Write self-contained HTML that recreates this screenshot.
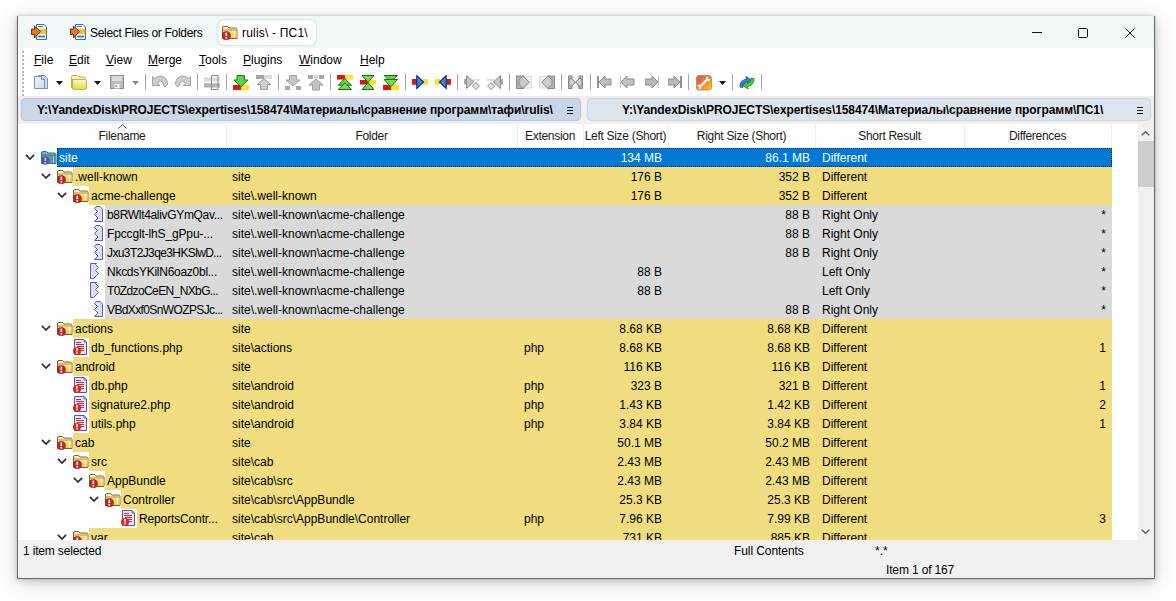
<!DOCTYPE html><html><head><meta charset="utf-8"><style>
*{margin:0;padding:0;box-sizing:border-box}
html,body{width:1176px;height:601px;overflow:hidden;background:#fefefe;font-family:"Liberation Sans", sans-serif;font-size:12px;color:#000;position:relative}
.abs{position:absolute}
.t{position:absolute;white-space:nowrap;line-height:14px}
u{text-decoration:underline;text-underline-offset:1px}
</style></head><body>
<svg width="0" height="0" style="position:absolute"><defs><symbol id="app" viewBox="0 0 16 16"><path d="M5.5 0.5 H13 L15.5 3 V15.5 H5.5 Z" fill="#eef5fc" stroke="#3c6cb4"/>
<path d="M7 2.5 H12" stroke="#4a78c0" stroke-width="1"/>
<rect x="6" y="5" width="9" height="5" fill="#f0c420"/>
<path d="M7 12.5 H14" stroke="#3c6cb4" stroke-width="1.6"/>
<path d="M0.5 5 H3.5 V2 L9.5 7.5 L3.5 14 V10.5 H0.5 Z" fill="#e8752a" stroke="#5a2a10" stroke-width="0.9"/></symbol><symbol id="fold" viewBox="0 0 16 16"><defs><linearGradient id="fg" x1="0" y1="0" x2="0" y2="1"><stop offset="0" stop-color="#fbe58a"/><stop offset="1" stop-color="#f0c850"/></linearGradient></defs>
<path d="M0.5 4 Q0.5 2.5 2 2.5 H5.5 L7 4 H13.5 Q15 4 15 5.5 V14.5 H0.5 Z" fill="#fdf0b8" stroke="#7c6420"/>
<path d="M1 6.5 H14.5 V14 H1 Z" fill="url(#fg)"/>
<path d="M1 6 H14.5" stroke="#a89040" stroke-width="1"/>
<path d="M12.5 7 V13.5" stroke="#fff6c8" stroke-width="1"/>
<circle cx="4.3" cy="11.7" r="4.1" fill="#c42626" stroke="#8a1818" stroke-width="0.6"/>
<path d="M4.3 8.6 V12.2" stroke="#fff" stroke-width="1.6"/><rect x="3.5" y="13" width="1.6" height="1.6" fill="#fff"/></symbol><symbol id="site" viewBox="0 0 16 16"><path d="M0.5 4 Q0.5 2.5 2 2.5 H5.5 L7 4 H13.5 Q15 4 15 5.5 V14.5 H0.5 Z" fill="#78b8bc" stroke="#3a6e7c"/>
<path d="M1 6.5 H14.5 V14 H1 Z" fill="#4e9ca4"/>
<path d="M1 6 H14.5" stroke="#3a6e7c" stroke-width="1"/>
<path d="M12.5 7 V13.5" stroke="#8cd0d0" stroke-width="1"/>
<circle cx="4.3" cy="11.7" r="4.1" fill="#5058a8"/>
<path d="M4.3 8.6 V12.2" stroke="#c0c4f0" stroke-width="1.6"/><rect x="3.5" y="13" width="1.6" height="1.6" fill="#c0c4f0"/></symbol><symbol id="php" viewBox="0 0 16 16"><path d="M1.5 0.5 H11 L13.5 3 V15.5 H1.5 Z" fill="#e6e6fa" stroke="#5252b4"/>
<path d="M11 0.5 V3 H13.5" fill="none" stroke="#5252b4" stroke-width="0.8"/>
<path d="M3 3.5 H8 M3 5.5 H11 M4 7.5 H11 M5 9.5 H11 M6 11.5 H11" stroke="#d02828" stroke-width="1"/>
<circle cx="4" cy="12" r="4" fill="#cc2c22"/>
<path d="M4 9 V12.4" stroke="#fff" stroke-width="1.4"/><rect x="3.3" y="13.1" width="1.4" height="1.4" fill="#fff"/></symbol><symbol id="rfile" viewBox="0 0 16 16"><path d="M7 0.5 H11 L13.5 3 V15.5 H5.5 L9 12 L5.5 8.5 L8.5 5.5 L5.5 2.5 Z" fill="#dcdcf6" stroke="#5a5ab8" stroke-dasharray="none"/></symbol><symbol id="lfile" viewBox="0 0 16 16"><path d="M1.5 0.5 H7.5 L6.5 1.5 L9.5 4.5 L6.5 7.5 L9.5 10.5 L4.5 15.5 H1.5 Z" fill="#dcdcf6" stroke="#5a5ab8"/></symbol><symbol id="new" viewBox="0 0 16 16"><defs><linearGradient id="ng" x1="0" y1="0" x2="1" y2="1"><stop offset="0" stop-color="#f4f8fe"/><stop offset="1" stop-color="#c4d8f2"/></linearGradient></defs>
<path d="M4.5 0.5 H10.5 L13.5 3.5 V13.5 H4.5 Z" fill="#c8daf2" stroke="#8090b0"/>
<path d="M0.5 1.5 H7.5 L10.5 4.5 V13.5 H0.5 Z" fill="url(#ng)" stroke="#8090b0"/>
<path d="M7.5 1.5 V4.5 H10.5" fill="#e0ebf8" stroke="#8090b0"/></symbol><symbol id="open" viewBox="0 0 16 16"><defs><linearGradient id="og" x1="0" y1="0" x2="0" y2="1"><stop offset="0" stop-color="#fbf8c8"/><stop offset="1" stop-color="#dede30"/></linearGradient></defs>
<path d="M0.5 2 Q0.5 0.5 2 0.5 H6 L7.5 2 H13 Q14.5 2 14.5 3.5 V5 H0.5 Z" fill="#fbf7c0" stroke="#bdb43a"/>
<path d="M0.5 4.5 Q0.5 4 1.5 4 V13 Q0.5 13 0.5 12 Z" fill="#fbf7c0" stroke="#bdb43a"/>
<path d="M3 4.5 H14 Q15.5 4.5 15.5 6 V13 Q15.5 14.5 14 14.5 H3 Q1.5 14.5 1.5 13 V6 Q1.5 4.5 3 4.5 Z" fill="url(#og)" stroke="#bdb43a"/></symbol><symbol id="save" viewBox="0 0 16 16"><rect x="0.5" y="0.5" width="13" height="13" fill="#bcbcbc" stroke="#8c8c8c"/>
<rect x="2" y="1" width="10" height="5" fill="#dcdcdc"/>
<rect x="4.5" y="9" width="5" height="4.5" fill="#f4f4f4"/><rect x="5.5" y="10" width="1.5" height="2" fill="#a0a0a0"/></symbol><symbol id="undo" viewBox="0 0 16 16"><path d="M0.5 2.5 L2.5 4.5 Q5 2 8.5 2 Q14.5 2.5 15.5 9 L15.5 10.5 L13 13 L11.8 11.5 Q11.5 7.5 8.5 7 Q6.5 7 5.5 9.5 L8 11.5 H0.5 Z" fill="#cfcfcf" stroke="#9a9a9a" stroke-width="0.9"/></symbol><symbol id="redo" viewBox="0 0 16 16"><g transform="translate(16,0) scale(-1,1)"><path d="M0.5 2.5 L2.5 4.5 Q5 2 8.5 2 Q14.5 2.5 15.5 9 L15.5 10.5 L13 13 L11.8 11.5 Q11.5 7.5 8.5 7 Q6.5 7 5.5 9.5 L8 11.5 H0.5 Z" fill="#cfcfcf" stroke="#9a9a9a" stroke-width="0.9"/></g></symbol><symbol id="split" viewBox="0 0 16 16"><rect x="0" y="2.5" width="16" height="4" fill="#dcdcdc"/><rect x="0" y="8.3" width="16" height="4.2" fill="#b4b4b4"/>
<rect x="7.5" y="0.5" width="6.5" height="14" fill="none" stroke="#8c8c8c"/></symbol><symbol id="dn_copy" viewBox="0 0 16 16"><rect x="0" y="10" width="8" height="5" fill="#d81818"/><rect x="8" y="10" width="8" height="5" fill="#f4e428"/>
<path d="M4 0.5 H11.5 V5 H15 L8 11.8 L1 5 H4 Z" fill="#58d83a" stroke="#1a7a10"/></symbol><symbol id="up_gray" viewBox="0 0 16 16"><rect x="0" y="0" width="8" height="4" fill="#a4a4a4"/><rect x="8" y="0" width="8" height="4" fill="#dcdcdc"/>
<path d="M8 3.8 L14.8 9.5 H11.5 V14.5 H4.5 V9.5 H1.2 Z" fill="#cfcfcf" stroke="#9c9c9c"/></symbol><symbol id="dn_gray" viewBox="0 0 16 16"><path d="M4.5 0.5 H11.5 V5 H15 L8 11 L1 5 H4.5 Z" fill="#c4c4c4" stroke="#a0a0a0"/>
<rect x="0" y="11" width="5" height="4" fill="#a8a8a8"/><rect x="11" y="11" width="5" height="4" fill="#a8a8a8"/></symbol><symbol id="up_gray2" viewBox="0 0 16 16"><rect x="0" y="0" width="5" height="4" fill="#a8a8a8"/><rect x="6" y="0" width="4" height="4" fill="#d8d8d8"/><rect x="11" y="0" width="5" height="4" fill="#a8a8a8"/>
<path d="M8 4 L15 10 H11.5 V15 H4.5 V10 H1 Z" fill="#c4c4c4" stroke="#a0a0a0"/></symbol><symbol id="dbl_up" viewBox="0 0 16 16"><rect x="0" y="0" width="8" height="4.6" fill="#d81818"/><rect x="8" y="0" width="8" height="4.6" fill="#f4e428"/>
<path d="M7.8 3.5 L14.5 10.2 H1.2 Z" fill="#5cd83c" stroke="#166e0e"/>
<path d="M7.8 8 L14.5 14.5 H1.2 Z" fill="#6ce04c" stroke="#166e0e"/></symbol><symbol id="hour" viewBox="0 0 16 16"><rect x="0" y="5" width="8" height="4.6" fill="#d81818"/><rect x="8" y="5" width="8" height="4.6" fill="#f4e428"/>
<path d="M2 0.5 H14 L8 7.3 Z" fill="#6ce04c" stroke="#166e0e"/>
<path d="M2 14.5 H14 L8 7.7 Z" fill="#6ce04c" stroke="#166e0e"/></symbol><symbol id="dbl_dn" viewBox="0 0 16 16"><rect x="0" y="9.8" width="8" height="5.2" fill="#d81818"/><rect x="8" y="9.8" width="8" height="5.2" fill="#f4e428"/>
<path d="M7.8 7 L14.5 0.5 H1.2 Z" fill="#5cd83c" stroke="#166e0e"/>
<path d="M7.8 11.8 L14.5 4.5 H1.2 Z" fill="#6ce04c" stroke="#166e0e"/></symbol><symbol id="to_r" viewBox="0 0 16 16"><rect x="0" y="4" width="5" height="5.8" fill="#d81818"/><rect x="11" y="4" width="5" height="5.8" fill="#f4e428"/>
<path d="M4.8 0.6 L11.6 7 L4.8 13.4 Z" fill="#3088e8" stroke="#0c2a78" stroke-width="1.1"/></symbol><symbol id="to_l" viewBox="0 0 16 16"><rect x="0" y="4" width="5" height="5.8" fill="#f4e428"/><rect x="11" y="4" width="5" height="5.8" fill="#d81818"/>
<path d="M11.2 0.6 L4.4 7 L11.2 13.4 Z" fill="#3088e8" stroke="#0c2a78" stroke-width="1.1"/></symbol><symbol id="g1" viewBox="0 0 16 16"><rect x="9" y="4" width="7" height="2" fill="#dedede"/>
<rect x="0" y="4" width="3" height="5.5" fill="#a8a8a8"/>
<path d="M2.5 0.5 L9.8 7 L2.5 13.5 Z" fill="#c4c4c4" stroke="#8c8c8c"/>
<path d="M11.9 7.6 L15.4 11.1 L11.9 14.6 L8.4 11.1 Z" fill="#e0e0e0" stroke="#8c8c8c"/></symbol><symbol id="g2" viewBox="0 0 16 16"><g transform="translate(16,0) scale(-1,1)"><rect x="9" y="4" width="7" height="2" fill="#dedede"/>
<rect x="0" y="4" width="3" height="5.5" fill="#a8a8a8"/>
<path d="M2.5 0.5 L9.8 7 L2.5 13.5 Z" fill="#c4c4c4" stroke="#8c8c8c"/>
<path d="M11.9 7.6 L15.4 11.1 L11.9 14.6 L8.4 11.1 Z" fill="#e0e0e0" stroke="#8c8c8c"/></g></symbol><symbol id="g3" viewBox="0 0 16 16"><rect x="8.5" y="1.5" width="7" height="11.5" fill="#f0f0f0" stroke="#dcdcdc"/>
<rect x="0.5" y="1" width="7" height="12.5" fill="#b4b4b4" stroke="#8a8a8a"/>
<path d="M7 0.8 L13.2 7.2 L7 13.6 L3 9.5 L3 5 Z" fill="#cacaca" stroke="#848484"/></symbol><symbol id="g4" viewBox="0 0 16 16"><g transform="translate(16,0) scale(-1,1)"><rect x="8.5" y="1.5" width="7" height="11.5" fill="#f0f0f0" stroke="#dcdcdc"/>
<rect x="0.5" y="1" width="7" height="12.5" fill="#b4b4b4" stroke="#8a8a8a"/>
<path d="M7 0.8 L13.2 7.2 L7 13.6 L3 9.5 L3 5 Z" fill="#cacaca" stroke="#848484"/></g></symbol><symbol id="g5" viewBox="0 0 16 16"><rect x="4.5" y="1" width="6" height="12.5" fill="#f2f2f2"/>
<rect x="0.5" y="1" width="3.5" height="12.5" fill="#b0b0b0" stroke="#8a8a8a"/>
<rect x="11" y="1" width="3.5" height="12.5" fill="#b0b0b0" stroke="#8a8a8a"/>
<path d="M3 3 L7.5 7.3 L3 11.5 L1 9.5 V5 Z" fill="#d0d0d0" stroke="#808080"/>
<path d="M12 3 L7.5 7.3 L12 11.5 L14 9.5 V5 Z" fill="#d0d0d0" stroke="#808080"/></symbol><symbol id="first" viewBox="0 0 16 16"><rect x="0" y="1" width="2" height="12" fill="#909090"/><path d="M2 7 L8 1 V4 H14 V10 H8 V13 Z" fill="#c0c0c0" stroke="#8a8a8a"/></symbol><symbol id="prev" viewBox="0 0 16 16"><rect x="0" y="1" width="1" height="12" fill="#c8c8c8"/><path d="M1 7 L7 1 V4 H14 V10 H7 V13 Z" fill="#c0c0c0" stroke="#8a8a8a"/></symbol><symbol id="next" viewBox="0 0 16 16"><rect x="13" y="1" width="1" height="12" fill="#c8c8c8"/><path d="M13 7 L7 1 V4 H0 V10 H7 V13 Z" fill="#b8b8b8" stroke="#8a8a8a"/></symbol><symbol id="last" viewBox="0 0 16 16"><rect x="12" y="1" width="2" height="12" fill="#909090"/><path d="M12 7 L6 1 V4 H0 V10 H6 V13 Z" fill="#b8b8b8" stroke="#8a8a8a"/></symbol><symbol id="wrench" viewBox="0 0 16 16"><defs><linearGradient id="wg" x1="0" y1="0" x2="1" y2="1"><stop offset="0" stop-color="#d84a50"/><stop offset="0.55" stop-color="#ee8a3a"/><stop offset="1" stop-color="#fccc18"/></linearGradient></defs>
<rect x="0.5" y="0.5" width="15" height="14.5" rx="2.5" fill="url(#wg)" stroke="#c88030" stroke-width="0.8"/>
<path d="M3.5 12.5 L11.5 4" stroke="#fff" stroke-width="2.2"/>
<path d="M10 4.5 Q9.5 1.5 12.5 1.5 L11.5 3 L13 4.5 L14.5 3.5 Q14.5 6.5 11.5 6 Z" fill="#fff"/>
<path d="M5 11.5 Q5.5 14.5 2.5 14 L3.5 12.5 L2 11 L0.8 12 Q1 9 4 9.5 Z" fill="#fff"/></symbol><symbol id="refresh" viewBox="0 0 16 16"><path d="M1 12 Q0.5 5.5 7.5 4 L6.8 1.5 L12.5 5 L7.5 9 L7.5 7 Q4 8 3.8 12.5 Z" fill="#3a7ce6" stroke="#1a3c9c" stroke-width="0.8"/>
<path d="M15 3.5 Q15.5 10 8.5 11.5 L9.2 14 L3.5 10.5 L8.5 6.5 L8.5 8.5 Q12 7.5 12.2 3 Z" fill="#44d030" stroke="#1a7c10" stroke-width="0.8"/></symbol></defs></svg>
<div class="abs" style="left:17px;top:16px;width:1138px;height:563px;background:#fff;box-shadow:0 0 3px rgba(0,0,0,0.18), 0 2px 8px rgba(0,0,0,0.12), 0 4px 20px rgba(0,0,0,0.16)"></div>
<div class="abs" style="left:17px;top:16px;width:1138px;height:563px;border:1px solid #6a6a6a;border-top:none;z-index:5"></div>
<div class="abs" style="left:18px;top:16px;width:1136px;height:32px;background:#f0f8f7"></div>
<svg class="abs" style="left:31px;top:24px" width="16" height="16" viewBox="0 0 16 16"><use href="#app"/></svg>
<svg class="abs" style="left:70px;top:24px" width="16" height="16" viewBox="0 0 16 16"><use href="#app"/></svg>
<div class="abs" style="left:218px;top:20px;width:98px;height:25px;background:#fff;border-radius:6px;box-shadow:0 0 1.5px rgba(0,0,0,0.35)"></div>
<svg class="abs" style="left:222px;top:24px" width="16" height="16" viewBox="0 0 16 16"><use href="#fold"/></svg>
<div class="t" style="left:90px;top:26px;letter-spacing:-0.3px">Select Files or Folders</div>
<div class="t" style="left:242px;top:26px;letter-spacing:0.2px">rulis\ - ПС1\</div>
<div class="abs" style="left:1032px;top:32px;width:10px;height:1px;background:#111"></div>
<div class="abs" style="left:1078px;top:28px;width:10px;height:10px;border:1px solid #111;border-radius:1.5px"></div>
<svg class="abs" style="left:1124px;top:27px" width="12" height="12" viewBox="0 0 12 12"><path d="M1.3 1.3 L10.7 10.7 M10.7 1.3 L1.3 10.7" stroke="#111" stroke-width="1"/></svg>
<div class="t" style="left:34px;top:53px;"><u>F</u>ile</div>
<div class="t" style="left:69px;top:53px;"><u>E</u>dit</div>
<div class="t" style="left:106px;top:53px;"><u>V</u>iew</div>
<div class="t" style="left:148px;top:53px;"><u>M</u>erge</div>
<div class="t" style="left:199px;top:53px;"><u>T</u>ools</div>
<div class="t" style="left:243px;top:53px;"><u>P</u>lugins</div>
<div class="t" style="left:299px;top:53px;"><u>W</u>indow</div>
<div class="t" style="left:360px;top:53px;"><u>H</u>elp</div>
<div class="abs" style="left:22px;top:51px;width:2px;height:2px;background:#b4b4b4"></div>
<div class="abs" style="left:22px;top:55px;width:2px;height:2px;background:#b4b4b4"></div>
<div class="abs" style="left:22px;top:59px;width:2px;height:2px;background:#b4b4b4"></div>
<div class="abs" style="left:22px;top:63px;width:2px;height:2px;background:#b4b4b4"></div>
<div class="abs" style="left:22px;top:67px;width:2px;height:2px;background:#b4b4b4"></div>
<div class="abs" style="left:22px;top:71px;width:2px;height:2px;background:#b4b4b4"></div>
<div class="abs" style="left:22px;top:74px;width:2px;height:2px;background:#b4b4b4"></div>
<div class="abs" style="left:22px;top:78px;width:2px;height:2px;background:#b4b4b4"></div>
<div class="abs" style="left:22px;top:82px;width:2px;height:2px;background:#b4b4b4"></div>
<div class="abs" style="left:22px;top:86px;width:2px;height:2px;background:#b4b4b4"></div>
<div class="abs" style="left:22px;top:90px;width:2px;height:2px;background:#b4b4b4"></div>
<div class="abs" style="left:22px;top:94px;width:2px;height:2px;background:#b4b4b4"></div>
<div class="abs" style="left:145px;top:74px;width:1px;height:16px;background:#a8a8a8"></div>
<div class="abs" style="left:197px;top:74px;width:1px;height:16px;background:#a8a8a8"></div>
<div class="abs" style="left:226px;top:74px;width:1px;height:16px;background:#a8a8a8"></div>
<div class="abs" style="left:278px;top:74px;width:1px;height:16px;background:#a8a8a8"></div>
<div class="abs" style="left:330px;top:74px;width:1px;height:16px;background:#a8a8a8"></div>
<div class="abs" style="left:405px;top:74px;width:1px;height:16px;background:#a8a8a8"></div>
<div class="abs" style="left:457px;top:74px;width:1px;height:16px;background:#a8a8a8"></div>
<div class="abs" style="left:509px;top:74px;width:1px;height:16px;background:#a8a8a8"></div>
<div class="abs" style="left:561px;top:74px;width:1px;height:16px;background:#a8a8a8"></div>
<div class="abs" style="left:590px;top:74px;width:1px;height:16px;background:#a8a8a8"></div>
<div class="abs" style="left:688px;top:74px;width:1px;height:16px;background:#a8a8a8"></div>
<div class="abs" style="left:732px;top:74px;width:1px;height:16px;background:#a8a8a8"></div>
<div class="abs" style="left:761px;top:74px;width:1px;height:16px;background:#a8a8a8"></div>
<svg class="abs" style="left:34px;top:75px" width="16" height="16" viewBox="0 0 16 16"><use href="#new"/></svg>
<svg class="abs" style="left:71px;top:75px" width="16" height="16" viewBox="0 0 16 16"><use href="#open"/></svg>
<svg class="abs" style="left:110px;top:75px" width="16" height="16" viewBox="0 0 16 16"><use href="#save"/></svg>
<svg class="abs" style="left:152px;top:74px" width="16" height="16" viewBox="0 0 16 16"><use href="#undo"/></svg>
<svg class="abs" style="left:175px;top:74px" width="16" height="16" viewBox="0 0 16 16"><use href="#redo"/></svg>
<svg class="abs" style="left:204px;top:75px" width="16" height="16" viewBox="0 0 16 16"><use href="#split"/></svg>
<svg class="abs" style="left:233px;top:75px" width="16" height="16" viewBox="0 0 16 16"><use href="#dn_copy"/></svg>
<svg class="abs" style="left:256px;top:75px" width="16" height="16" viewBox="0 0 16 16"><use href="#up_gray"/></svg>
<svg class="abs" style="left:285px;top:75px" width="16" height="16" viewBox="0 0 16 16"><use href="#dn_gray"/></svg>
<svg class="abs" style="left:308px;top:75px" width="16" height="16" viewBox="0 0 16 16"><use href="#up_gray2"/></svg>
<svg class="abs" style="left:337px;top:75px" width="16" height="16" viewBox="0 0 16 16"><use href="#dbl_up"/></svg>
<svg class="abs" style="left:360px;top:75px" width="16" height="16" viewBox="0 0 16 16"><use href="#hour"/></svg>
<svg class="abs" style="left:383px;top:75px" width="16" height="16" viewBox="0 0 16 16"><use href="#dbl_dn"/></svg>
<svg class="abs" style="left:412px;top:75px" width="16" height="16" viewBox="0 0 16 16"><use href="#to_r"/></svg>
<svg class="abs" style="left:435px;top:75px" width="16" height="16" viewBox="0 0 16 16"><use href="#to_l"/></svg>
<svg class="abs" style="left:464px;top:75px" width="16" height="16" viewBox="0 0 16 16"><use href="#g1"/></svg>
<svg class="abs" style="left:487px;top:75px" width="16" height="16" viewBox="0 0 16 16"><use href="#g2"/></svg>
<svg class="abs" style="left:516px;top:75px" width="16" height="16" viewBox="0 0 16 16"><use href="#g3"/></svg>
<svg class="abs" style="left:539px;top:75px" width="16" height="16" viewBox="0 0 16 16"><use href="#g4"/></svg>
<svg class="abs" style="left:568px;top:75px" width="16" height="16" viewBox="0 0 16 16"><use href="#g5"/></svg>
<svg class="abs" style="left:597px;top:75px" width="16" height="16" viewBox="0 0 16 16"><use href="#first"/></svg>
<svg class="abs" style="left:620px;top:75px" width="16" height="16" viewBox="0 0 16 16"><use href="#prev"/></svg>
<svg class="abs" style="left:645px;top:75px" width="16" height="16" viewBox="0 0 16 16"><use href="#next"/></svg>
<svg class="abs" style="left:668px;top:75px" width="16" height="16" viewBox="0 0 16 16"><use href="#last"/></svg>
<svg class="abs" style="left:696px;top:75px" width="16" height="16" viewBox="0 0 16 16"><use href="#wrench"/></svg>
<svg class="abs" style="left:739px;top:75px" width="16" height="16" viewBox="0 0 16 16"><use href="#refresh"/></svg>
<svg class="abs" style="left:56px;top:81px" width="7" height="4" viewBox="0 0 7 4"><path d="M0 0 H7 L3.5 4 Z" fill="#111"/></svg>
<svg class="abs" style="left:94px;top:81px" width="7" height="4" viewBox="0 0 7 4"><path d="M0 0 H7 L3.5 4 Z" fill="#111"/></svg>
<svg class="abs" style="left:132px;top:81px" width="7" height="4" viewBox="0 0 7 4"><path d="M0 0 H7 L3.5 4 Z" fill="#888"/></svg>
<svg class="abs" style="left:719px;top:81px" width="7" height="4" viewBox="0 0 7 4"><path d="M0 0 H7 L3.5 4 Z" fill="#111"/></svg>
<div class="abs" style="left:18px;top:96px;width:1136px;height:28px;background:#f0f0f0"></div>
<div class="abs" style="left:22px;top:99px;width:558px;height:21px;background:#cad7e6;border-radius:4px;box-shadow:0 0 1px 0.5px #b8c2ce"></div>
<div class="abs" style="left:588px;top:99px;width:562px;height:21px;background:#dce4ed;border-radius:4px;box-shadow:0 0 1px 0.5px #ccd3db"></div>
<div class="t" style="left:37px;top:103px;font-weight:bold;letter-spacing:-0.08px">Y:\YandexDisk\PROJECTS\expertises\158474\Материалы\сравнение программ\тафи\rulis\</div>
<div class="t" style="left:622px;top:103px;font-weight:bold;letter-spacing:-0.08px">Y:\YandexDisk\PROJECTS\expertises\158474\Материалы\сравнение программ\ПС1\</div>
<div class="abs" style="left:567px;top:107px;width:6px;height:1px;background:#1a1a1a"></div>
<div class="abs" style="left:567px;top:110px;width:6px;height:1px;background:#1a1a1a"></div>
<div class="abs" style="left:567px;top:113px;width:6px;height:1px;background:#1a1a1a"></div>
<div class="abs" style="left:1137px;top:107px;width:6px;height:1px;background:#1a1a1a"></div>
<div class="abs" style="left:1137px;top:110px;width:6px;height:1px;background:#1a1a1a"></div>
<div class="abs" style="left:1137px;top:113px;width:6px;height:1px;background:#1a1a1a"></div>
<div class="abs" style="left:18px;top:124px;width:1120px;height:24px;background:#fff"></div>
<div class="t" style="left:18px;top:129px;width:208px;text-align:center;color:#1a1a1a;letter-spacing:-0.3px">Filename</div>
<div class="abs" style="left:226px;top:124px;width:1px;height:24px;background:#ececec"></div>
<div class="t" style="left:226px;top:129px;width:291px;text-align:center;color:#1a1a1a;letter-spacing:-0.3px">Folder</div>
<div class="abs" style="left:517px;top:124px;width:1px;height:24px;background:#ececec"></div>
<div class="t" style="left:517px;top:129px;width:66px;text-align:center;color:#1a1a1a;letter-spacing:-0.3px">Extension</div>
<div class="abs" style="left:583px;top:124px;width:1px;height:24px;background:#ececec"></div>
<div class="t" style="left:583px;top:129px;width:85px;text-align:center;color:#1a1a1a;letter-spacing:-0.3px">Left Size (Short)</div>
<div class="abs" style="left:668px;top:124px;width:1px;height:24px;background:#ececec"></div>
<div class="t" style="left:668px;top:129px;width:147px;text-align:center;color:#1a1a1a;letter-spacing:-0.3px">Right Size (Short)</div>
<div class="abs" style="left:815px;top:124px;width:1px;height:24px;background:#ececec"></div>
<div class="t" style="left:815px;top:129px;width:149px;text-align:center;color:#1a1a1a;letter-spacing:-0.3px">Short Result</div>
<div class="abs" style="left:964px;top:124px;width:1px;height:24px;background:#ececec"></div>
<div class="t" style="left:964px;top:129px;width:147px;text-align:center;color:#1a1a1a;letter-spacing:-0.3px">Differences</div>
<div class="abs" style="left:1111px;top:124px;width:1px;height:24px;background:#ececec"></div>
<svg class="abs" style="left:118px;top:124px" width="9" height="5" viewBox="0 0 9 5"><path d="M0.5 4.5 L4.5 0.7 L8.5 4.5" fill="none" stroke="#444" stroke-width="1"/></svg>
<div class="abs" style="left:57px;top:148px;width:1055px;height:19px;background:#0078d7"></div>
<div class="abs" style="left:57px;top:148px;width:1055px;height:1px;background:repeating-linear-gradient(90deg,#15263a 0 1px,transparent 1px 2px)"></div>
<div class="abs" style="left:57px;top:166px;width:1055px;height:1px;background:repeating-linear-gradient(90deg,#15263a 0 1px,transparent 1px 2px)"></div>
<div class="abs" style="left:57px;top:148px;width:1px;height:19px;background:repeating-linear-gradient(180deg,#15263a 0 1px,transparent 1px 2px)"></div>
<div class="abs" style="left:1111px;top:148px;width:1px;height:19px;background:repeating-linear-gradient(180deg,#15263a 0 1px,transparent 1px 2px)"></div>
<svg class="abs" style="left:25px;top:154px" width="10" height="6" viewBox="0 0 10 6"><path d="M0.9 0.9 L5 5 L9.1 0.9" fill="none" stroke="#2e2e2e" stroke-width="1.7"/></svg>
<svg class="abs" style="left:41px;top:149px" width="16" height="16" viewBox="0 0 16 16"><use href="#site"/></svg>
<div class="abs" style="left:59px;top:148px;width:167px;overflow:hidden;height:19px;"><div class="t" style="left:0;top:3px;width:167px;text-align:left;color:#fff">site</div></div>
<div class="abs" style="left:232px;top:148px;width:285px;overflow:hidden;height:19px;"><div class="t" style="left:0;top:3px;width:285px;text-align:left;color:#fff"></div></div>
<div class="abs" style="left:524px;top:148px;width:59px;overflow:hidden;height:19px;"><div class="t" style="left:0;top:3px;width:59px;text-align:left;color:#fff"></div></div>
<div class="abs" style="left:583px;top:148px;width:79px;overflow:hidden;height:19px;"><div class="t" style="left:0;top:3px;width:79px;text-align:right;color:#fff">134 MB</div></div>
<div class="abs" style="left:668px;top:148px;width:142px;overflow:hidden;height:19px;"><div class="t" style="left:0;top:3px;width:142px;text-align:right;color:#fff">86.1 MB</div></div>
<div class="abs" style="left:822px;top:148px;width:140px;overflow:hidden;height:19px;"><div class="t" style="left:0;top:3px;width:140px;text-align:left;color:#fff">Different</div></div>
<div class="abs" style="left:964px;top:148px;width:142px;overflow:hidden;height:19px;"><div class="t" style="left:0;top:3px;width:142px;text-align:right;color:#fff"></div></div>
<div class="abs" style="left:73px;top:167px;width:1039px;height:19px;background:#efdd80"></div>
<svg class="abs" style="left:41px;top:173px" width="10" height="6" viewBox="0 0 10 6"><path d="M0.9 0.9 L5 5 L9.1 0.9" fill="none" stroke="#2e2e2e" stroke-width="1.7"/></svg>
<svg class="abs" style="left:57px;top:168px" width="16" height="16" viewBox="0 0 16 16"><use href="#fold"/></svg>
<div class="abs" style="left:75px;top:167px;width:151px;overflow:hidden;height:19px;"><div class="t" style="left:0;top:3px;width:151px;text-align:left;color:#000">.well-known</div></div>
<div class="abs" style="left:232px;top:167px;width:285px;overflow:hidden;height:19px;"><div class="t" style="left:0;top:3px;width:285px;text-align:left;color:#000">site</div></div>
<div class="abs" style="left:524px;top:167px;width:59px;overflow:hidden;height:19px;"><div class="t" style="left:0;top:3px;width:59px;text-align:left;color:#000"></div></div>
<div class="abs" style="left:583px;top:167px;width:79px;overflow:hidden;height:19px;"><div class="t" style="left:0;top:3px;width:79px;text-align:right;color:#000">176 B</div></div>
<div class="abs" style="left:668px;top:167px;width:142px;overflow:hidden;height:19px;"><div class="t" style="left:0;top:3px;width:142px;text-align:right;color:#000">352 B</div></div>
<div class="abs" style="left:822px;top:167px;width:140px;overflow:hidden;height:19px;"><div class="t" style="left:0;top:3px;width:140px;text-align:left;color:#000">Different</div></div>
<div class="abs" style="left:964px;top:167px;width:142px;overflow:hidden;height:19px;"><div class="t" style="left:0;top:3px;width:142px;text-align:right;color:#000"></div></div>
<div class="abs" style="left:89px;top:186px;width:1023px;height:19px;background:#efdd80"></div>
<svg class="abs" style="left:57px;top:192px" width="10" height="6" viewBox="0 0 10 6"><path d="M0.9 0.9 L5 5 L9.1 0.9" fill="none" stroke="#2e2e2e" stroke-width="1.7"/></svg>
<svg class="abs" style="left:73px;top:187px" width="16" height="16" viewBox="0 0 16 16"><use href="#fold"/></svg>
<div class="abs" style="left:91px;top:186px;width:135px;overflow:hidden;height:19px;"><div class="t" style="left:0;top:3px;width:135px;text-align:left;color:#000">acme-challenge</div></div>
<div class="abs" style="left:232px;top:186px;width:285px;overflow:hidden;height:19px;"><div class="t" style="left:0;top:3px;width:285px;text-align:left;color:#000">site\.well-known</div></div>
<div class="abs" style="left:524px;top:186px;width:59px;overflow:hidden;height:19px;"><div class="t" style="left:0;top:3px;width:59px;text-align:left;color:#000"></div></div>
<div class="abs" style="left:583px;top:186px;width:79px;overflow:hidden;height:19px;"><div class="t" style="left:0;top:3px;width:79px;text-align:right;color:#000">176 B</div></div>
<div class="abs" style="left:668px;top:186px;width:142px;overflow:hidden;height:19px;"><div class="t" style="left:0;top:3px;width:142px;text-align:right;color:#000">352 B</div></div>
<div class="abs" style="left:822px;top:186px;width:140px;overflow:hidden;height:19px;"><div class="t" style="left:0;top:3px;width:140px;text-align:left;color:#000">Different</div></div>
<div class="abs" style="left:964px;top:186px;width:142px;overflow:hidden;height:19px;"><div class="t" style="left:0;top:3px;width:142px;text-align:right;color:#000"></div></div>
<div class="abs" style="left:105px;top:205px;width:1007px;height:19px;background:#dadada"></div>
<svg class="abs" style="left:89px;top:206px" width="16" height="16" viewBox="0 0 16 16"><use href="#rfile"/></svg>
<div class="abs" style="left:107px;top:205px;width:119px;overflow:hidden;height:19px;"><div class="t" style="left:0;top:3px;width:119px;text-align:left;color:#000"><span style="letter-spacing:-0.327px">b8RWlt4alivGYmQav...</span></div></div>
<div class="abs" style="left:232px;top:205px;width:285px;overflow:hidden;height:19px;"><div class="t" style="left:0;top:3px;width:285px;text-align:left;color:#000">site\.well-known\acme-challenge</div></div>
<div class="abs" style="left:524px;top:205px;width:59px;overflow:hidden;height:19px;"><div class="t" style="left:0;top:3px;width:59px;text-align:left;color:#000"></div></div>
<div class="abs" style="left:583px;top:205px;width:79px;overflow:hidden;height:19px;"><div class="t" style="left:0;top:3px;width:79px;text-align:right;color:#000"></div></div>
<div class="abs" style="left:668px;top:205px;width:142px;overflow:hidden;height:19px;"><div class="t" style="left:0;top:3px;width:142px;text-align:right;color:#000">88 B</div></div>
<div class="abs" style="left:822px;top:205px;width:140px;overflow:hidden;height:19px;"><div class="t" style="left:0;top:3px;width:140px;text-align:left;color:#000">Right Only</div></div>
<div class="abs" style="left:964px;top:205px;width:142px;overflow:hidden;height:19px;"><div class="t" style="left:0;top:3px;width:142px;text-align:right;color:#000">*</div></div>
<div class="abs" style="left:105px;top:224px;width:1007px;height:19px;background:#dadada"></div>
<svg class="abs" style="left:89px;top:225px" width="16" height="16" viewBox="0 0 16 16"><use href="#rfile"/></svg>
<div class="abs" style="left:107px;top:224px;width:119px;overflow:hidden;height:19px;"><div class="t" style="left:0;top:3px;width:119px;text-align:left;color:#000"><span style="letter-spacing:-0.144px">Fpccglt-lhS_gPpu-...</span></div></div>
<div class="abs" style="left:232px;top:224px;width:285px;overflow:hidden;height:19px;"><div class="t" style="left:0;top:3px;width:285px;text-align:left;color:#000">site\.well-known\acme-challenge</div></div>
<div class="abs" style="left:524px;top:224px;width:59px;overflow:hidden;height:19px;"><div class="t" style="left:0;top:3px;width:59px;text-align:left;color:#000"></div></div>
<div class="abs" style="left:583px;top:224px;width:79px;overflow:hidden;height:19px;"><div class="t" style="left:0;top:3px;width:79px;text-align:right;color:#000"></div></div>
<div class="abs" style="left:668px;top:224px;width:142px;overflow:hidden;height:19px;"><div class="t" style="left:0;top:3px;width:142px;text-align:right;color:#000">88 B</div></div>
<div class="abs" style="left:822px;top:224px;width:140px;overflow:hidden;height:19px;"><div class="t" style="left:0;top:3px;width:140px;text-align:left;color:#000">Right Only</div></div>
<div class="abs" style="left:964px;top:224px;width:142px;overflow:hidden;height:19px;"><div class="t" style="left:0;top:3px;width:142px;text-align:right;color:#000">*</div></div>
<div class="abs" style="left:105px;top:243px;width:1007px;height:19px;background:#dadada"></div>
<svg class="abs" style="left:89px;top:244px" width="16" height="16" viewBox="0 0 16 16"><use href="#rfile"/></svg>
<div class="abs" style="left:107px;top:243px;width:119px;overflow:hidden;height:19px;"><div class="t" style="left:0;top:3px;width:119px;text-align:left;color:#000"><span style="letter-spacing:-0.61px">Jxu3T2J3qe3HKSlwD...</span></div></div>
<div class="abs" style="left:232px;top:243px;width:285px;overflow:hidden;height:19px;"><div class="t" style="left:0;top:3px;width:285px;text-align:left;color:#000">site\.well-known\acme-challenge</div></div>
<div class="abs" style="left:524px;top:243px;width:59px;overflow:hidden;height:19px;"><div class="t" style="left:0;top:3px;width:59px;text-align:left;color:#000"></div></div>
<div class="abs" style="left:583px;top:243px;width:79px;overflow:hidden;height:19px;"><div class="t" style="left:0;top:3px;width:79px;text-align:right;color:#000"></div></div>
<div class="abs" style="left:668px;top:243px;width:142px;overflow:hidden;height:19px;"><div class="t" style="left:0;top:3px;width:142px;text-align:right;color:#000">88 B</div></div>
<div class="abs" style="left:822px;top:243px;width:140px;overflow:hidden;height:19px;"><div class="t" style="left:0;top:3px;width:140px;text-align:left;color:#000">Right Only</div></div>
<div class="abs" style="left:964px;top:243px;width:142px;overflow:hidden;height:19px;"><div class="t" style="left:0;top:3px;width:142px;text-align:right;color:#000">*</div></div>
<div class="abs" style="left:105px;top:262px;width:1007px;height:19px;background:#dadada"></div>
<svg class="abs" style="left:89px;top:263px" width="16" height="16" viewBox="0 0 16 16"><use href="#lfile"/></svg>
<div class="abs" style="left:107px;top:262px;width:119px;overflow:hidden;height:19px;"><div class="t" style="left:0;top:3px;width:119px;text-align:left;color:#000"><span style="letter-spacing:-0.269px">NkcdsYKilN6oaz0bl...</span></div></div>
<div class="abs" style="left:232px;top:262px;width:285px;overflow:hidden;height:19px;"><div class="t" style="left:0;top:3px;width:285px;text-align:left;color:#000">site\.well-known\acme-challenge</div></div>
<div class="abs" style="left:524px;top:262px;width:59px;overflow:hidden;height:19px;"><div class="t" style="left:0;top:3px;width:59px;text-align:left;color:#000"></div></div>
<div class="abs" style="left:583px;top:262px;width:79px;overflow:hidden;height:19px;"><div class="t" style="left:0;top:3px;width:79px;text-align:right;color:#000">88 B</div></div>
<div class="abs" style="left:668px;top:262px;width:142px;overflow:hidden;height:19px;"><div class="t" style="left:0;top:3px;width:142px;text-align:right;color:#000"></div></div>
<div class="abs" style="left:822px;top:262px;width:140px;overflow:hidden;height:19px;"><div class="t" style="left:0;top:3px;width:140px;text-align:left;color:#000">Left Only</div></div>
<div class="abs" style="left:964px;top:262px;width:142px;overflow:hidden;height:19px;"><div class="t" style="left:0;top:3px;width:142px;text-align:right;color:#000">*</div></div>
<div class="abs" style="left:105px;top:281px;width:1007px;height:19px;background:#dadada"></div>
<svg class="abs" style="left:89px;top:282px" width="16" height="16" viewBox="0 0 16 16"><use href="#lfile"/></svg>
<div class="abs" style="left:107px;top:281px;width:119px;overflow:hidden;height:19px;"><div class="t" style="left:0;top:3px;width:119px;text-align:left;color:#000"><span style="letter-spacing:-0.612px">T0ZdzoCeEN_NXbG...</span></div></div>
<div class="abs" style="left:232px;top:281px;width:285px;overflow:hidden;height:19px;"><div class="t" style="left:0;top:3px;width:285px;text-align:left;color:#000">site\.well-known\acme-challenge</div></div>
<div class="abs" style="left:524px;top:281px;width:59px;overflow:hidden;height:19px;"><div class="t" style="left:0;top:3px;width:59px;text-align:left;color:#000"></div></div>
<div class="abs" style="left:583px;top:281px;width:79px;overflow:hidden;height:19px;"><div class="t" style="left:0;top:3px;width:79px;text-align:right;color:#000">88 B</div></div>
<div class="abs" style="left:668px;top:281px;width:142px;overflow:hidden;height:19px;"><div class="t" style="left:0;top:3px;width:142px;text-align:right;color:#000"></div></div>
<div class="abs" style="left:822px;top:281px;width:140px;overflow:hidden;height:19px;"><div class="t" style="left:0;top:3px;width:140px;text-align:left;color:#000">Left Only</div></div>
<div class="abs" style="left:964px;top:281px;width:142px;overflow:hidden;height:19px;"><div class="t" style="left:0;top:3px;width:142px;text-align:right;color:#000">*</div></div>
<div class="abs" style="left:105px;top:300px;width:1007px;height:19px;background:#dadada"></div>
<svg class="abs" style="left:89px;top:301px" width="16" height="16" viewBox="0 0 16 16"><use href="#rfile"/></svg>
<div class="abs" style="left:107px;top:300px;width:119px;overflow:hidden;height:19px;"><div class="t" style="left:0;top:3px;width:119px;text-align:left;color:#000"><span style="letter-spacing:-0.622px">VBdXxf0SnWOZPSJc...</span></div></div>
<div class="abs" style="left:232px;top:300px;width:285px;overflow:hidden;height:19px;"><div class="t" style="left:0;top:3px;width:285px;text-align:left;color:#000">site\.well-known\acme-challenge</div></div>
<div class="abs" style="left:524px;top:300px;width:59px;overflow:hidden;height:19px;"><div class="t" style="left:0;top:3px;width:59px;text-align:left;color:#000"></div></div>
<div class="abs" style="left:583px;top:300px;width:79px;overflow:hidden;height:19px;"><div class="t" style="left:0;top:3px;width:79px;text-align:right;color:#000"></div></div>
<div class="abs" style="left:668px;top:300px;width:142px;overflow:hidden;height:19px;"><div class="t" style="left:0;top:3px;width:142px;text-align:right;color:#000">88 B</div></div>
<div class="abs" style="left:822px;top:300px;width:140px;overflow:hidden;height:19px;"><div class="t" style="left:0;top:3px;width:140px;text-align:left;color:#000">Right Only</div></div>
<div class="abs" style="left:964px;top:300px;width:142px;overflow:hidden;height:19px;"><div class="t" style="left:0;top:3px;width:142px;text-align:right;color:#000">*</div></div>
<div class="abs" style="left:73px;top:319px;width:1039px;height:19px;background:#efdd80"></div>
<svg class="abs" style="left:41px;top:325px" width="10" height="6" viewBox="0 0 10 6"><path d="M0.9 0.9 L5 5 L9.1 0.9" fill="none" stroke="#2e2e2e" stroke-width="1.7"/></svg>
<svg class="abs" style="left:57px;top:320px" width="16" height="16" viewBox="0 0 16 16"><use href="#fold"/></svg>
<div class="abs" style="left:75px;top:319px;width:151px;overflow:hidden;height:19px;"><div class="t" style="left:0;top:3px;width:151px;text-align:left;color:#000">actions</div></div>
<div class="abs" style="left:232px;top:319px;width:285px;overflow:hidden;height:19px;"><div class="t" style="left:0;top:3px;width:285px;text-align:left;color:#000">site</div></div>
<div class="abs" style="left:524px;top:319px;width:59px;overflow:hidden;height:19px;"><div class="t" style="left:0;top:3px;width:59px;text-align:left;color:#000"></div></div>
<div class="abs" style="left:583px;top:319px;width:79px;overflow:hidden;height:19px;"><div class="t" style="left:0;top:3px;width:79px;text-align:right;color:#000">8.68 KB</div></div>
<div class="abs" style="left:668px;top:319px;width:142px;overflow:hidden;height:19px;"><div class="t" style="left:0;top:3px;width:142px;text-align:right;color:#000">8.68 KB</div></div>
<div class="abs" style="left:822px;top:319px;width:140px;overflow:hidden;height:19px;"><div class="t" style="left:0;top:3px;width:140px;text-align:left;color:#000">Different</div></div>
<div class="abs" style="left:964px;top:319px;width:142px;overflow:hidden;height:19px;"><div class="t" style="left:0;top:3px;width:142px;text-align:right;color:#000"></div></div>
<div class="abs" style="left:89px;top:338px;width:1023px;height:19px;background:#efdd80"></div>
<svg class="abs" style="left:73px;top:339px" width="16" height="16" viewBox="0 0 16 16"><use href="#php"/></svg>
<div class="abs" style="left:91px;top:338px;width:135px;overflow:hidden;height:19px;"><div class="t" style="left:0;top:3px;width:135px;text-align:left;color:#000">db_functions.php</div></div>
<div class="abs" style="left:232px;top:338px;width:285px;overflow:hidden;height:19px;"><div class="t" style="left:0;top:3px;width:285px;text-align:left;color:#000">site\actions</div></div>
<div class="abs" style="left:524px;top:338px;width:59px;overflow:hidden;height:19px;"><div class="t" style="left:0;top:3px;width:59px;text-align:left;color:#000">php</div></div>
<div class="abs" style="left:583px;top:338px;width:79px;overflow:hidden;height:19px;"><div class="t" style="left:0;top:3px;width:79px;text-align:right;color:#000">8.68 KB</div></div>
<div class="abs" style="left:668px;top:338px;width:142px;overflow:hidden;height:19px;"><div class="t" style="left:0;top:3px;width:142px;text-align:right;color:#000">8.68 KB</div></div>
<div class="abs" style="left:822px;top:338px;width:140px;overflow:hidden;height:19px;"><div class="t" style="left:0;top:3px;width:140px;text-align:left;color:#000">Different</div></div>
<div class="abs" style="left:964px;top:338px;width:142px;overflow:hidden;height:19px;"><div class="t" style="left:0;top:3px;width:142px;text-align:right;color:#000">1</div></div>
<div class="abs" style="left:73px;top:357px;width:1039px;height:19px;background:#efdd80"></div>
<svg class="abs" style="left:41px;top:363px" width="10" height="6" viewBox="0 0 10 6"><path d="M0.9 0.9 L5 5 L9.1 0.9" fill="none" stroke="#2e2e2e" stroke-width="1.7"/></svg>
<svg class="abs" style="left:57px;top:358px" width="16" height="16" viewBox="0 0 16 16"><use href="#fold"/></svg>
<div class="abs" style="left:75px;top:357px;width:151px;overflow:hidden;height:19px;"><div class="t" style="left:0;top:3px;width:151px;text-align:left;color:#000">android</div></div>
<div class="abs" style="left:232px;top:357px;width:285px;overflow:hidden;height:19px;"><div class="t" style="left:0;top:3px;width:285px;text-align:left;color:#000">site</div></div>
<div class="abs" style="left:524px;top:357px;width:59px;overflow:hidden;height:19px;"><div class="t" style="left:0;top:3px;width:59px;text-align:left;color:#000"></div></div>
<div class="abs" style="left:583px;top:357px;width:79px;overflow:hidden;height:19px;"><div class="t" style="left:0;top:3px;width:79px;text-align:right;color:#000">116 KB</div></div>
<div class="abs" style="left:668px;top:357px;width:142px;overflow:hidden;height:19px;"><div class="t" style="left:0;top:3px;width:142px;text-align:right;color:#000">116 KB</div></div>
<div class="abs" style="left:822px;top:357px;width:140px;overflow:hidden;height:19px;"><div class="t" style="left:0;top:3px;width:140px;text-align:left;color:#000">Different</div></div>
<div class="abs" style="left:964px;top:357px;width:142px;overflow:hidden;height:19px;"><div class="t" style="left:0;top:3px;width:142px;text-align:right;color:#000"></div></div>
<div class="abs" style="left:89px;top:376px;width:1023px;height:19px;background:#efdd80"></div>
<svg class="abs" style="left:73px;top:377px" width="16" height="16" viewBox="0 0 16 16"><use href="#php"/></svg>
<div class="abs" style="left:91px;top:376px;width:135px;overflow:hidden;height:19px;"><div class="t" style="left:0;top:3px;width:135px;text-align:left;color:#000">db.php</div></div>
<div class="abs" style="left:232px;top:376px;width:285px;overflow:hidden;height:19px;"><div class="t" style="left:0;top:3px;width:285px;text-align:left;color:#000">site\android</div></div>
<div class="abs" style="left:524px;top:376px;width:59px;overflow:hidden;height:19px;"><div class="t" style="left:0;top:3px;width:59px;text-align:left;color:#000">php</div></div>
<div class="abs" style="left:583px;top:376px;width:79px;overflow:hidden;height:19px;"><div class="t" style="left:0;top:3px;width:79px;text-align:right;color:#000">323 B</div></div>
<div class="abs" style="left:668px;top:376px;width:142px;overflow:hidden;height:19px;"><div class="t" style="left:0;top:3px;width:142px;text-align:right;color:#000">321 B</div></div>
<div class="abs" style="left:822px;top:376px;width:140px;overflow:hidden;height:19px;"><div class="t" style="left:0;top:3px;width:140px;text-align:left;color:#000">Different</div></div>
<div class="abs" style="left:964px;top:376px;width:142px;overflow:hidden;height:19px;"><div class="t" style="left:0;top:3px;width:142px;text-align:right;color:#000">1</div></div>
<div class="abs" style="left:89px;top:395px;width:1023px;height:19px;background:#efdd80"></div>
<svg class="abs" style="left:73px;top:396px" width="16" height="16" viewBox="0 0 16 16"><use href="#php"/></svg>
<div class="abs" style="left:91px;top:395px;width:135px;overflow:hidden;height:19px;"><div class="t" style="left:0;top:3px;width:135px;text-align:left;color:#000">signature2.php</div></div>
<div class="abs" style="left:232px;top:395px;width:285px;overflow:hidden;height:19px;"><div class="t" style="left:0;top:3px;width:285px;text-align:left;color:#000">site\android</div></div>
<div class="abs" style="left:524px;top:395px;width:59px;overflow:hidden;height:19px;"><div class="t" style="left:0;top:3px;width:59px;text-align:left;color:#000">php</div></div>
<div class="abs" style="left:583px;top:395px;width:79px;overflow:hidden;height:19px;"><div class="t" style="left:0;top:3px;width:79px;text-align:right;color:#000">1.43 KB</div></div>
<div class="abs" style="left:668px;top:395px;width:142px;overflow:hidden;height:19px;"><div class="t" style="left:0;top:3px;width:142px;text-align:right;color:#000">1.42 KB</div></div>
<div class="abs" style="left:822px;top:395px;width:140px;overflow:hidden;height:19px;"><div class="t" style="left:0;top:3px;width:140px;text-align:left;color:#000">Different</div></div>
<div class="abs" style="left:964px;top:395px;width:142px;overflow:hidden;height:19px;"><div class="t" style="left:0;top:3px;width:142px;text-align:right;color:#000">2</div></div>
<div class="abs" style="left:89px;top:414px;width:1023px;height:19px;background:#efdd80"></div>
<svg class="abs" style="left:73px;top:415px" width="16" height="16" viewBox="0 0 16 16"><use href="#php"/></svg>
<div class="abs" style="left:91px;top:414px;width:135px;overflow:hidden;height:19px;"><div class="t" style="left:0;top:3px;width:135px;text-align:left;color:#000">utils.php</div></div>
<div class="abs" style="left:232px;top:414px;width:285px;overflow:hidden;height:19px;"><div class="t" style="left:0;top:3px;width:285px;text-align:left;color:#000">site\android</div></div>
<div class="abs" style="left:524px;top:414px;width:59px;overflow:hidden;height:19px;"><div class="t" style="left:0;top:3px;width:59px;text-align:left;color:#000">php</div></div>
<div class="abs" style="left:583px;top:414px;width:79px;overflow:hidden;height:19px;"><div class="t" style="left:0;top:3px;width:79px;text-align:right;color:#000">3.84 KB</div></div>
<div class="abs" style="left:668px;top:414px;width:142px;overflow:hidden;height:19px;"><div class="t" style="left:0;top:3px;width:142px;text-align:right;color:#000">3.84 KB</div></div>
<div class="abs" style="left:822px;top:414px;width:140px;overflow:hidden;height:19px;"><div class="t" style="left:0;top:3px;width:140px;text-align:left;color:#000">Different</div></div>
<div class="abs" style="left:964px;top:414px;width:142px;overflow:hidden;height:19px;"><div class="t" style="left:0;top:3px;width:142px;text-align:right;color:#000">1</div></div>
<div class="abs" style="left:73px;top:433px;width:1039px;height:19px;background:#efdd80"></div>
<svg class="abs" style="left:41px;top:439px" width="10" height="6" viewBox="0 0 10 6"><path d="M0.9 0.9 L5 5 L9.1 0.9" fill="none" stroke="#2e2e2e" stroke-width="1.7"/></svg>
<svg class="abs" style="left:57px;top:434px" width="16" height="16" viewBox="0 0 16 16"><use href="#fold"/></svg>
<div class="abs" style="left:75px;top:433px;width:151px;overflow:hidden;height:19px;"><div class="t" style="left:0;top:3px;width:151px;text-align:left;color:#000">cab</div></div>
<div class="abs" style="left:232px;top:433px;width:285px;overflow:hidden;height:19px;"><div class="t" style="left:0;top:3px;width:285px;text-align:left;color:#000">site</div></div>
<div class="abs" style="left:524px;top:433px;width:59px;overflow:hidden;height:19px;"><div class="t" style="left:0;top:3px;width:59px;text-align:left;color:#000"></div></div>
<div class="abs" style="left:583px;top:433px;width:79px;overflow:hidden;height:19px;"><div class="t" style="left:0;top:3px;width:79px;text-align:right;color:#000">50.1 MB</div></div>
<div class="abs" style="left:668px;top:433px;width:142px;overflow:hidden;height:19px;"><div class="t" style="left:0;top:3px;width:142px;text-align:right;color:#000">50.2 MB</div></div>
<div class="abs" style="left:822px;top:433px;width:140px;overflow:hidden;height:19px;"><div class="t" style="left:0;top:3px;width:140px;text-align:left;color:#000">Different</div></div>
<div class="abs" style="left:964px;top:433px;width:142px;overflow:hidden;height:19px;"><div class="t" style="left:0;top:3px;width:142px;text-align:right;color:#000"></div></div>
<div class="abs" style="left:89px;top:452px;width:1023px;height:19px;background:#efdd80"></div>
<svg class="abs" style="left:57px;top:458px" width="10" height="6" viewBox="0 0 10 6"><path d="M0.9 0.9 L5 5 L9.1 0.9" fill="none" stroke="#2e2e2e" stroke-width="1.7"/></svg>
<svg class="abs" style="left:73px;top:453px" width="16" height="16" viewBox="0 0 16 16"><use href="#fold"/></svg>
<div class="abs" style="left:91px;top:452px;width:135px;overflow:hidden;height:19px;"><div class="t" style="left:0;top:3px;width:135px;text-align:left;color:#000">src</div></div>
<div class="abs" style="left:232px;top:452px;width:285px;overflow:hidden;height:19px;"><div class="t" style="left:0;top:3px;width:285px;text-align:left;color:#000">site\cab</div></div>
<div class="abs" style="left:524px;top:452px;width:59px;overflow:hidden;height:19px;"><div class="t" style="left:0;top:3px;width:59px;text-align:left;color:#000"></div></div>
<div class="abs" style="left:583px;top:452px;width:79px;overflow:hidden;height:19px;"><div class="t" style="left:0;top:3px;width:79px;text-align:right;color:#000">2.43 MB</div></div>
<div class="abs" style="left:668px;top:452px;width:142px;overflow:hidden;height:19px;"><div class="t" style="left:0;top:3px;width:142px;text-align:right;color:#000">2.43 MB</div></div>
<div class="abs" style="left:822px;top:452px;width:140px;overflow:hidden;height:19px;"><div class="t" style="left:0;top:3px;width:140px;text-align:left;color:#000">Different</div></div>
<div class="abs" style="left:964px;top:452px;width:142px;overflow:hidden;height:19px;"><div class="t" style="left:0;top:3px;width:142px;text-align:right;color:#000"></div></div>
<div class="abs" style="left:105px;top:471px;width:1007px;height:19px;background:#efdd80"></div>
<svg class="abs" style="left:73px;top:477px" width="10" height="6" viewBox="0 0 10 6"><path d="M0.9 0.9 L5 5 L9.1 0.9" fill="none" stroke="#2e2e2e" stroke-width="1.7"/></svg>
<svg class="abs" style="left:89px;top:472px" width="16" height="16" viewBox="0 0 16 16"><use href="#fold"/></svg>
<div class="abs" style="left:107px;top:471px;width:119px;overflow:hidden;height:19px;"><div class="t" style="left:0;top:3px;width:119px;text-align:left;color:#000">AppBundle</div></div>
<div class="abs" style="left:232px;top:471px;width:285px;overflow:hidden;height:19px;"><div class="t" style="left:0;top:3px;width:285px;text-align:left;color:#000">site\cab\src</div></div>
<div class="abs" style="left:524px;top:471px;width:59px;overflow:hidden;height:19px;"><div class="t" style="left:0;top:3px;width:59px;text-align:left;color:#000"></div></div>
<div class="abs" style="left:583px;top:471px;width:79px;overflow:hidden;height:19px;"><div class="t" style="left:0;top:3px;width:79px;text-align:right;color:#000">2.43 MB</div></div>
<div class="abs" style="left:668px;top:471px;width:142px;overflow:hidden;height:19px;"><div class="t" style="left:0;top:3px;width:142px;text-align:right;color:#000">2.43 MB</div></div>
<div class="abs" style="left:822px;top:471px;width:140px;overflow:hidden;height:19px;"><div class="t" style="left:0;top:3px;width:140px;text-align:left;color:#000">Different</div></div>
<div class="abs" style="left:964px;top:471px;width:142px;overflow:hidden;height:19px;"><div class="t" style="left:0;top:3px;width:142px;text-align:right;color:#000"></div></div>
<div class="abs" style="left:121px;top:490px;width:991px;height:19px;background:#efdd80"></div>
<svg class="abs" style="left:89px;top:496px" width="10" height="6" viewBox="0 0 10 6"><path d="M0.9 0.9 L5 5 L9.1 0.9" fill="none" stroke="#2e2e2e" stroke-width="1.7"/></svg>
<svg class="abs" style="left:105px;top:491px" width="16" height="16" viewBox="0 0 16 16"><use href="#fold"/></svg>
<div class="abs" style="left:123px;top:490px;width:103px;overflow:hidden;height:19px;"><div class="t" style="left:0;top:3px;width:103px;text-align:left;color:#000">Controller</div></div>
<div class="abs" style="left:232px;top:490px;width:285px;overflow:hidden;height:19px;"><div class="t" style="left:0;top:3px;width:285px;text-align:left;color:#000">site\cab\src\AppBundle</div></div>
<div class="abs" style="left:524px;top:490px;width:59px;overflow:hidden;height:19px;"><div class="t" style="left:0;top:3px;width:59px;text-align:left;color:#000"></div></div>
<div class="abs" style="left:583px;top:490px;width:79px;overflow:hidden;height:19px;"><div class="t" style="left:0;top:3px;width:79px;text-align:right;color:#000">25.3 KB</div></div>
<div class="abs" style="left:668px;top:490px;width:142px;overflow:hidden;height:19px;"><div class="t" style="left:0;top:3px;width:142px;text-align:right;color:#000">25.3 KB</div></div>
<div class="abs" style="left:822px;top:490px;width:140px;overflow:hidden;height:19px;"><div class="t" style="left:0;top:3px;width:140px;text-align:left;color:#000">Different</div></div>
<div class="abs" style="left:964px;top:490px;width:142px;overflow:hidden;height:19px;"><div class="t" style="left:0;top:3px;width:142px;text-align:right;color:#000"></div></div>
<div class="abs" style="left:137px;top:509px;width:975px;height:19px;background:#efdd80"></div>
<svg class="abs" style="left:121px;top:510px" width="16" height="16" viewBox="0 0 16 16"><use href="#php"/></svg>
<div class="abs" style="left:139px;top:509px;width:87px;overflow:hidden;height:19px;"><div class="t" style="left:0;top:3px;width:87px;text-align:left;color:#000"><span style="letter-spacing:-0.139px">ReportsContr...</span></div></div>
<div class="abs" style="left:232px;top:509px;width:285px;overflow:hidden;height:19px;"><div class="t" style="left:0;top:3px;width:285px;text-align:left;color:#000">site\cab\src\AppBundle\Controller</div></div>
<div class="abs" style="left:524px;top:509px;width:59px;overflow:hidden;height:19px;"><div class="t" style="left:0;top:3px;width:59px;text-align:left;color:#000">php</div></div>
<div class="abs" style="left:583px;top:509px;width:79px;overflow:hidden;height:19px;"><div class="t" style="left:0;top:3px;width:79px;text-align:right;color:#000">7.96 KB</div></div>
<div class="abs" style="left:668px;top:509px;width:142px;overflow:hidden;height:19px;"><div class="t" style="left:0;top:3px;width:142px;text-align:right;color:#000">7.99 KB</div></div>
<div class="abs" style="left:822px;top:509px;width:140px;overflow:hidden;height:19px;"><div class="t" style="left:0;top:3px;width:140px;text-align:left;color:#000">Different</div></div>
<div class="abs" style="left:964px;top:509px;width:142px;overflow:hidden;height:19px;"><div class="t" style="left:0;top:3px;width:142px;text-align:right;color:#000">3</div></div>
<div class="abs" style="left:89px;top:528px;width:1023px;height:12px;background:#efdd80"></div>
<svg class="abs" style="left:57px;top:534px" width="10" height="6" viewBox="0 0 10 6"><path d="M0.9 0.9 L5 5 L9.1 0.9" fill="none" stroke="#2e2e2e" stroke-width="1.7"/></svg>
<div class="abs" style="left:73px;top:528px;width:16px;height:12px;overflow:hidden"><svg class="abs" style="left:0;top:1px" width="16" height="16" viewBox="0 0 16 16"><use href="#fold"/></svg></div>
<div class="abs" style="left:91px;top:528px;width:135px;overflow:hidden;height:12px;"><div class="t" style="left:0;top:3px;width:135px;text-align:left;color:#000">var</div></div>
<div class="abs" style="left:232px;top:528px;width:285px;overflow:hidden;height:12px;"><div class="t" style="left:0;top:3px;width:285px;text-align:left;color:#000">site\cab</div></div>
<div class="abs" style="left:524px;top:528px;width:59px;overflow:hidden;height:12px;"><div class="t" style="left:0;top:3px;width:59px;text-align:left;color:#000"></div></div>
<div class="abs" style="left:583px;top:528px;width:79px;overflow:hidden;height:12px;"><div class="t" style="left:0;top:3px;width:79px;text-align:right;color:#000">731 KB</div></div>
<div class="abs" style="left:668px;top:528px;width:142px;overflow:hidden;height:12px;"><div class="t" style="left:0;top:3px;width:142px;text-align:right;color:#000">885 KB</div></div>
<div class="abs" style="left:822px;top:528px;width:140px;overflow:hidden;height:12px;"><div class="t" style="left:0;top:3px;width:140px;text-align:left;color:#000">Different</div></div>
<div class="abs" style="left:964px;top:528px;width:142px;overflow:hidden;height:12px;"><div class="t" style="left:0;top:3px;width:142px;text-align:right;color:#000"></div></div>
<div class="abs" style="left:1138px;top:124px;width:16px;height:416px;background:#f0f0f0"></div>
<div class="abs" style="left:1138px;top:141px;width:16px;height:46px;background:#cdcdcd"></div>
<svg class="abs" style="left:1141px;top:131px" width="9" height="5" viewBox="0 0 9 5"><path d="M0.7 4.3 L4.5 0.8 L8.3 4.3" fill="none" stroke="#606060" stroke-width="1.5"/></svg>
<svg class="abs" style="left:1141px;top:529px" width="9" height="5" viewBox="0 0 9 5"><path d="M0.7 0.7 L4.5 4.2 L8.3 0.7" fill="none" stroke="#606060" stroke-width="1.5"/></svg>
<div class="abs" style="left:18px;top:540px;width:1136px;height:38px;background:#f0f0f0"></div>
<div class="t" style="left:23px;top:544px;letter-spacing:-0.17px">1 item selected</div>
<div class="t" style="left:734px;top:544px;letter-spacing:-0.08px">Full Contents</div>
<div class="t" style="left:875px;top:544px;">*.*</div>
<div class="t" style="left:886px;top:563px;letter-spacing:-0.15px">Item 1 of 167</div>
</body></html>
